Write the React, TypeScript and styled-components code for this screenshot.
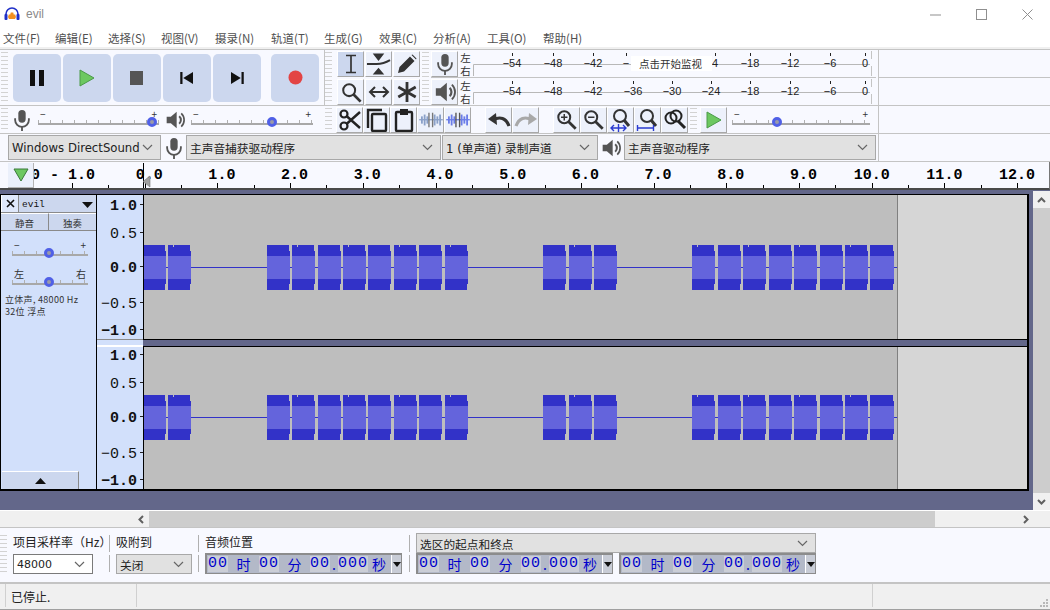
import styled, { createGlobalStyle } from "styled-components";

const Global = createGlobalStyle`
  html, body {
    margin: 0;
    width: 1050px;
    height: 610px;
    overflow: hidden;
    background: #fff;
    font-family: "Liberation Sans", "Noto Sans CJK SC", sans-serif;
  }
  * { box-sizing: border-box; }
`;

const CJK = `"Noto Sans CJK SC", "Liberation Sans", sans-serif`;
const MONO = `"Liberation Mono", monospace`;

const Window = styled.div`
  width: 1050px;
  height: 610px;
  display: flex;
  flex-direction: column;
`;

/* title + menu */
const TitleBar = styled.div`
  height: 28px;
  display: flex;
  align-items: center;
  padding-left: 4px;
  color: #8a8a8a;
  font-size: 12px;
  gap: 6px;
`;
const WinButtons = styled.div`
  margin-left: auto;
  display: flex;
  color: #8f8f8f;
`;
const WinButton = styled.div`
  width: 46px;
  height: 28px;
  display: flex;
  align-items: center;
  justify-content: center;
`;
const MenuBar = styled.div`
  height: 21px;
  display: flex;
  align-items: center;
  font-family: ${CJK};
  font-size: 11.5px;
  color: #505050;
  border-bottom: 2px solid #f0f0f0;
`;
const MenuItem = styled.span<{ $x: number }>`
  width: ${(p) => p.$x}px;
  padding-left: 3px;
  white-space: nowrap;
`;

/* dock */
const Dock = styled.div`
  height: 113px;
  display: flex;
  background: #f8f9ff;
  border-top: 1px solid #c4c4c4;
`;
const DockLeft = styled.div`
  width: 879px;
  flex: none;
  display: flex;
  flex-direction: column;
  border-right: 1px solid #c4c4c4;
`;
const DockRest = styled.div`
  flex: 1;
  display: flex;
  flex-direction: column;
`;
const DockLine = styled.div`
  height: 28px;
  border-bottom: 1px solid #c4c4c4;
`;
const TopRows = styled.div`
  height: 56px;
  flex: none;
  display: flex;
  border-bottom: 1px solid #c4c4c4;
`;
const Row = styled.div`
  height: 28px;
  flex: none;
  display: flex;
  align-items: center;
  border-bottom: 1px solid #c4c4c4;
`;
const Grip = styled.div<{ $w?: number; $mx?: number }>`
  flex: none;
  width: ${(p) => p.$w ?? 7}px;
  margin: 2px ${(p) => p.$mx ?? 0}px;
  align-self: stretch;
  background: repeating-linear-gradient(to bottom, #d2d2d2 0 1px, transparent 1px 4px);
`;
const Transport = styled.div`
  width: 325px;
  flex: none;
  display: flex;
  align-items: center;
  padding-left: 1px;
  border-right: 1px solid #c4c4c4;
`;
const BigButton = styled.div<{ $ml?: number }>`
  width: 48px;
  height: 48px;
  flex: none;
  margin-left: ${(p) => p.$ml ?? 2}px;
  border-radius: 5px;
  background: #ccd7ee;
  display: flex;
  align-items: center;
  justify-content: center;
`;
const ToolPanel = styled.div`
  display: flex;
  flex-direction: column;
  flex: none;
  width: 88px;
  padding-left: 5px;
`;
const ToolRow = styled.div`
  display: flex;
  height: 28px;
  flex: none;
  gap: 1px;
  align-items: center;
`;
const ToolButton = styled.div<{ $on?: boolean }>`
  width: 27px;
  height: 26px;
  flex: none;
  display: flex;
  align-items: center;
  justify-content: center;
  background: ${(p) => (p.$on ? "#ccd7ee" : "#edf1fb")};
  border-right: 1px solid #a8a8a8;
  border-bottom: 1px solid #a8a8a8;
  border-top: 1px solid #fff;
  border-left: 1px solid #fff;
  color: #333;
`;
const MeterStack = styled.div`
  width: 445px;
  flex: none;
  display: flex;
  flex-direction: column;
`;
const MeterRow = styled.div`
  height: 27px;
  flex: none;
  display: flex;
  align-items: center;
  &:first-child {
    height: 28px;
    border-bottom: 1px solid #c4c4c4;
  }
`;
const LeftRight = styled.div`
  width: 15px;
  flex: none;
  display: flex;
  flex-direction: column;
  align-items: center;
  font-family: ${CJK};
  font-size: 10.5px;
  line-height: 13px;
  color: #333;
`;
const Spacer = styled.div<{ $w: number }>`
  width: ${(p) => p.$w}px;
  flex: none;
`;
const IconCell = styled.div<{ $w?: number }>`
  width: ${(p) => p.$w ?? 26}px;
  flex: none;
  display: flex;
  align-items: center;
  justify-content: center;
  color: #555;
`;

/* slider */
const SliderBox = styled.div<{ $w: number }>`
  width: ${(p) => p.$w}px;
  flex: none;
  position: relative;
  height: 24px;
`;
const SliderEnds = styled.div`
  display: flex;
  justify-content: space-between;
  font-family: ${CJK};
  font-size: 10px;
  line-height: 10px;
  color: #333;
  height: 11px;
  padding: 1px 2px 0;
`;
const SliderTicks = styled.div`
  height: 3px;
  margin-top: 1px;
  background: repeating-linear-gradient(to right, #b0b0b0 0 1px, transparent 1px 12px);
`;
const SliderLine = styled.div`
  height: 2px;
  background: #a8a8a8;
`;
const Thumb = styled.div`
  position: absolute;
  top: 9px;
  width: 10px;
  height: 10px;
  border-radius: 50%;
  background: #9a9aa8;
  border: 3px solid #5060e6;
  margin-left: -5px;
`;

/* selects */
const Select = styled.div<{ $w: number; $h?: number; $white?: boolean }>`
  width: ${(p) => p.$w}px;
  height: ${(p) => p.$h ?? 25}px;
  flex: none;
  display: flex;
  align-items: center;
  justify-content: space-between;
  padding: 0 7px 0 3px;
  border: 1px solid ${(p) => (p.$white ? "#7a7a7a" : "#a8a8a8")};
  background: ${(p) => (p.$white ? "#fff" : "#e1e1e1")};
  font-family: "DejaVu Sans", ${CJK};
  font-size: ${(p) => (p.$white ? 11 : 11.7)}px;
  color: #222;
  white-space: nowrap;
`;

/* ruler */
const RulerBar = styled.div`
  height: 28px;
  flex: none;
  display: flex;
  align-items: flex-start;
  background: #f8f9ff;
  border-bottom: 2px solid #4a4a4a;
  border-right: 1px solid #777;
  padding-left: 8px;
`;
const PlayButton = styled.div`
  width: 26px;
  height: 25px;
  margin-top: 1px;
  flex: none;
  background: #ebf0fb;
  border-right: 1px solid #b4b4b4;
  border-bottom: 1px solid #b4b4b4;
  display: flex;
  align-items: center;
  justify-content: center;
`;

/* tracks */
const TrackArea = styled.div`
  height: 321px;
  flex: none;
  display: flex;
  background: #63678a;
  padding-top: 4px;
  border-bottom: 1px solid #fff;
`;
const TrackBox = styled.div`
  width: 1029px;
  height: 297px;
  flex: none;
  display: flex;
  border-style: solid;
  border-color: #000;
  border-width: 1px 2px 2px 1px;
`;
const TrackPanel = styled.div`
  width: 96px;
  flex: none;
  display: flex;
  flex-direction: column;
  background: #d2e0fb;
  border-right: 1px solid #000;
`;
const PanelTop = styled.div`
  display: flex;
  height: 18px;
  flex: none;
  border-bottom: 1px solid #8a8a8a;
`;
const CloseBox = styled.div`
  width: 18px;
  flex: none;
  display: flex;
  align-items: center;
  justify-content: center;
  background: #dfe8fb;
  border-right: 1px solid #8a8a8a;
  border-left: 1px solid #fff;
`;
const TrackName = styled.div`
  flex: 1;
  display: flex;
  align-items: center;
  justify-content: space-between;
  padding: 2px 3px 0;
  background: #ccd7ee;
  font-family: ${MONO};
  font-size: 9.5px;
  color: #111;
`;
const MuteRow = styled.div`
  display: flex;
  height: 18px;
  flex: none;
  border-bottom: 1px solid #8a8a8a;
`;
const MuteButton = styled.div`
  flex: 1;
  display: flex;
  align-items: center;
  justify-content: center;
  padding-top: 2px;
  background: #ccd7ee;
  border-right: 1px solid #8a8a8a;
  border-top: 1px solid #fff;
  font-family: ${CJK};
  font-size: 9.5px;
  color: #333;
  &:last-child { border-right: none; }
`;
const PanelSlider = styled.div`
  padding: 8px 0 0 11px;
  height: 29px;
  flex: none;
`;
const PanelInfo = styled.div`
  margin-top: 5px;
  padding-left: 4px;
  font-family: ${CJK};
  font-size: 9px;
  letter-spacing: 0.3px;
  line-height: 12px;
  color: #333;
  white-space: nowrap;
`;
const CollapseButton = styled.div`
  margin-top: auto;
  width: 77px;
  height: 18px;
  flex: none;
  margin-left: 1px;
  background: #ccd7ee;
  border-top: 1px solid #fff;
  border-right: 1px solid #8a8a8a;
  display: flex;
  align-items: center;
  justify-content: center;
`;
const Channels = styled.div`
  flex: 1;
  display: flex;
  flex-direction: column;
`;
const Channel = styled.div<{ $h: number }>`
  height: ${(p) => p.$h}px;
  flex: none;
  display: flex;
`;
const ScaleCol = styled.div`
  width: 47px;
  flex: none;
  background: #d2e0fb;
  border-right: 1px solid #000;
`;
const ClipArea = styled.div`
  width: 754px;
  flex: none;
  background: #bebebe;
  border-right: 1px solid #808080;
`;
const EmptyArea = styled.div`
  flex: 1;
  background: #d6d6d6;
`;
const ChannelGap = styled.div`
  height: 8px;
  flex: none;
  display: flex;
`;
const GapScale = styled.div`
  width: 46px;
  flex: none;
  background: #d2e0fb;
  border-top: 1px solid #8a8a8a;
  border-bottom: 2px solid #fff;
`;
const GapBar = styled.div`
  flex: 1;
  background: #63678a;
  border-top: 1px solid #000;
  border-bottom: 1px solid #000;
`;
const VScroll = styled.div`
  width: 17px;
  margin-left: 4px;
  margin-top: -3px;
  flex: none;
  background: #f0f0f0;
  display: flex;
  flex-direction: column;
  align-items: center;
  height: 319px;
`;
const ScrollArrow = styled.div<{ $w?: number; $h?: number }>`
  width: ${(p) => p.$w ?? 17}px;
  height: ${(p) => p.$h ?? 17}px;
  flex: none;
  display: flex;
  align-items: center;
  justify-content: center;
  color: #606060;
`;
const VThumb = styled.div`
  flex: 1;
  width: 100%;
  background: #cdcdcd;
`;
const HScroll = styled.div`
  height: 16px;
  flex: none;
  display: flex;
  background: #f0f0f0;
  padding-left: 132px;
`;
const HThumb = styled.div`
  width: 786px;
  flex: none;
  background: #cdcdcd;
`;
const HFill = styled.div`
  flex: 1;
  display: flex;
  justify-content: flex-end;
  padding-right: 16px;
`;

/* selection bar */
const SelectionBar = styled.div`
  height: 57px;
  flex: none;
  display: flex;
  background: #f8f9ff;
  border-top: 1px solid #c4c4c4;
  border-bottom: 2px solid #c4c4c4;
  padding: 5px 0 8px 0;
`;
const Field = styled.div<{ $w: number }>`
  width: ${(p) => p.$w}px;
  flex: none;
  display: flex;
  flex-direction: column;
  justify-content: space-between;
  font-family: ${CJK};
  font-size: 12px;
  color: #222;
`;
const FieldLabel = styled.div`
  height: 18px;
  line-height: 18px;
  white-space: nowrap;
`;
const FieldSep = styled.div`
  width: 7px;
  flex: none;
  display: flex;
  flex-direction: column;
  justify-content: space-between;
  align-items: flex-start;
  padding: 2px 0;
  &::before, &::after {
    content: "";
    width: 1px;
    height: 17px;
    background: #b0b0b0;
  }
`;
const TimeBox = styled.div`
  width: 197px;
  height: 21px;
  flex: none;
  display: flex;
  align-items: center;
  background: #b3b9c8;
  border: 1px solid #8c8c8c;
  border-width: 2px 1px 1px 2px;
  padding-left: 1px;
  font-family: ${MONO};
  font-size: 15px;
  color: #0000cc;
`;
const Digits = styled.span<{ $w: number }>`
  width: ${(p) => p.$w}px;
  flex: none;
  height: 16px;
  line-height: 16px;
  background: #cbced6;
  text-align: center;
  letter-spacing: 1px;
`;
const Unit = styled.span<{ $w: number }>`
  width: ${(p) => p.$w}px;
  flex: none;
  text-align: center;
  font-family: ${CJK};
  font-size: 14px;
  line-height: 16px;
`;
const TimeDrop = styled.div`
  margin-left: auto;
  width: 10px;
  align-self: stretch;
  background: #c8ccd6;
  border-left: 1px solid #fff;
  display: flex;
  align-items: center;
  justify-content: center;
`;
const TimePair = styled.div`
  display: flex;
  gap: 6px;
`;

/* status */
const StatusBar = styled.div`
  flex: 1;
  display: flex;
  background: #f0f0f0;
  border-bottom: 1px solid #a0a0a0;
  font-family: ${CJK};
  font-size: 12px;
  color: #222;
  position: relative;
`;
const StatusCell = styled.div<{ $w?: number }>`
  width: ${(p) => (p.$w ? `${p.$w}px` : "auto")};
  flex: ${(p) => (p.$w ? "none" : 1)};
  padding: 4px 0 0 5px;
  margin-bottom: 2px;
  border-left: 1px solid #d0d0d0;
  &:first-child { margin-left: 5px; }
`;
const ResizeGrip = styled.svg`
  position: absolute;
  right: 1px;
  bottom: 1px;
`;

/* icons */
const Ic = ({ s = 20, children, c = "currentColor" }: { s?: number; children: React.ReactNode; c?: string }) => (
  <svg width={s} height={s} viewBox="0 0 24 24" fill={c} stroke="none">{children}</svg>
);

const MicIcon = ({ s = 22 }: { s?: number }) => (
  <Ic s={s} c="#555">
    <rect x="8" y="1" width="8" height="14" rx="4" />
    <path d="M4.5 10v2a7.5 7.5 0 0 0 15 0v-2" fill="none" stroke="#555" strokeWidth="2" />
    <rect x="11" y="19" width="2" height="5" />
  </Ic>
);
const SpeakerIcon = ({ s = 22 }: { s?: number }) => (
  <Ic s={s} c="#555">
    <path d="M2 8h5l7-6v20l-7-6H2z" />
    <path d="M17 7.5a6 6 0 0 1 0 9" fill="none" stroke="#555" strokeWidth="2.4" />
    <path d="M19.5 4a11 11 0 0 1 0 16" fill="none" stroke="#555" strokeWidth="2" />
  </Ic>
);
const Chevron = ({ c = "#666" }: { c?: string }) => (
  <svg width="11" height="7" viewBox="0 0 11 7"><path d="M1 1l4.5 4.5L10 1" fill="none" stroke={c} strokeWidth="1.2" /></svg>
);
const Glass = ({ x = 9.5, y = 9.5, r = 6.5 }: { x?: number; y?: number; r?: number }) => (
  <>
    <circle cx={x} cy={y} r={r} fill="none" stroke="#333" strokeWidth="2.2" />
    <path d={`M${x + r * 0.7} ${y + r * 0.7}L${x + r + 6} ${y + r + 6}`} stroke="#333" strokeWidth="3" />
  </>
);
const Bars = ({ c, inner }: { c: string; inner: string }) => (
  <svg width="24" height="20" viewBox="0 0 26 22">
    {[2, 5, 8, 16, 19, 22].map((x, i) => (
      <rect key={x} x={x} y={i % 2 ? 5 : 7} width="2" height={i % 2 ? 12 : 8} fill={c} />
    ))}
    <rect x="0" y="10" width="26" height="1.4" fill={c} />
    <rect x="10" y="3" width="1.5" height="16" fill={inner} />
    <rect x="14" y="3" width="1.5" height="16" fill={inner} />
  </svg>
);

const menus: [string, number][] = [
  ["文件(F)", 52], ["编辑(E)", 53], ["选择(S)", 53], ["视图(V)", 54], ["摄录(N)", 56], ["轨道(T)", 53],
  ["生成(G)", 55], ["效果(C)", 54], ["分析(A)", 54], ["工具(O)", 56], ["帮助(H)", 60],
];

const meterMarks: [string, number][] = [
  ["−54", 512], ["−48", 553], ["−42", 593], ["−36", 633], ["−30", 672], ["−24", 711],
  ["−18", 750], ["−12", 790], ["−6", 830], ["0", 865],
];
// the monitor hint covers most of -36 to -24, only these bits stay visible
const hintMarks: [string, number][] = [
  ["−54", 512], ["−48", 553], ["−42", 593], ["−", 626], ["4", 715],
  ["−18", 750], ["−12", 790], ["−6", 830], ["0", 865],
];

const MeterLabel = styled.text`
  font-family: "Liberation Sans", sans-serif;
  font-size: 11px;
  fill: #222;
  text-anchor: middle;
`;

const Meter = ({ hint }: { hint?: boolean }) => (
  <svg width="403" height="27" viewBox="473 0 403 27">
    <path d="M473.5 26V14.5H870" fill="none" stroke="#b8b8b8" />
    <path d="M871.5 1v8M871.5 16v10" stroke="#c4c4c4" />
    {(hint ? hintMarks : meterMarks).map(([t, x]) => (
      <g key={t}>
        <rect x={x} y="3" width="1" height="3" fill="#222" />
        <MeterLabel x={x} y="17">{t}</MeterLabel>
      </g>
    ))}
    {hint && (
      <>
        <rect x="631" y="6" width="81" height="15" fill="#fff" />
        <text x="639" y="18" fontFamily="Noto Sans CJK SC" fontSize="10.5" fill="#333">点击开始监视</text>
      </>
    )}
  </svg>
);

const Slider = ({ w, at, ends = ["−", "+"] }: { w: number; at: number; ends?: string[] }) => (
  <SliderBox $w={w}>
    <SliderEnds><span>{ends[0]}</span><span>{ends[1]}</span></SliderEnds>
    <SliderTicks />
    <SliderLine />
    <Thumb style={{ left: at }} />
  </SliderBox>
);

const secX = (s: number) => 144.7 + 72.7 * s;

const Ruler = () => {
  const secs = Array.from({ length: 13 }, (_, i) => i);
  return (
    <svg width="1007" height="26" viewBox="34 0 1007 26" style={{ flex: "none" }}>
      <text x="31" y="17" fontFamily="Liberation Mono" fontWeight="700" fontSize="15" fill="#000">0</text>
      <text x="50" y="17" fontFamily="Liberation Mono" fontWeight="700" fontSize="15" fill="#000">- 1.0</text>
      {secs.map((s) => (
        <g key={s}>
          <text x={secX(s) + 18} y="17" textAnchor="end" fontFamily="Liberation Mono" fontWeight="700" fontSize="15" fill="#000">{s}.0</text>
          <rect x={Math.round(secX(s))} y="21" width="1" height="5" fill="#000" />
          <rect x={Math.round(secX(s) + 36.3)} y="23" width="1" height="3" fill="#000" />
        </g>
      ))}
      <rect x={Math.round(secX(-1))} y="21" width="1" height="5" fill="#000" />
      <rect x={Math.round(secX(-0.5))} y="23" width="1" height="3" fill="#000" />
      <rect x="143" y="1" width="1" height="25" fill="#000" />
      <path d="M150 14v11l-7-5.500z" fill="#a0a0a0" stroke="#777" strokeWidth="0.6" />
    </svg>
  );
};

const scaleMarks: [string, number, boolean][] = [
  ["1.0", 0, true], ["0.5", 28, false], ["0.0", 62, true], ["−0.5", 98, false], ["−1.0", 125, true],
];

const Scale = ({ top, h }: { top: number; h: number }) => (
  <svg width="46" height={h} viewBox={`0 0 46 ${h}`} style={{ display: "block" }}>
    {scaleMarks.map(([t, y, strong]) => (
      <g key={t}>
        <text
          x="40"
          y={top + y}
          textAnchor="end"
          fontFamily="Liberation Mono"
          fontWeight={strong ? 700 : 400}
          fontSize="15"
          fill="#111"
        >{t}</text>
        <rect x="43" y={top + y - 6} width="3" height="1" fill="#222" />
      </g>
    ))}
  </svg>
);

const blocks: [number, number][] = [
  [144, 165], [168, 190], [267, 289], [292, 314], [318, 340], [343, 365], [368, 390], [394, 416], [419, 441], [445, 467],
  [543, 565], [569, 591], [594, 616], [692, 714], [718, 740], [743, 765], [769, 791], [794, 816], [820, 842], [845, 867], [870, 893],
];

const Wave = ({ mid, h }: { mid: number; h: number }) => (
  <svg width="753" height={h} viewBox={`144 0 753 ${h}`} style={{ display: "block" }}>
    <rect x="144" y={mid} width="753" height="1" fill="#3232c8" />
    {blocks.map(([a, b], i) => (
      <g key={a}>
        <rect x={a} y={mid - 22} width={b - a} height="45" fill="#3232c8" />
        <rect x={b} y={mid - 16} width="1" height="33" fill="#3232c8" />
        <rect x={a} y={mid - 11} width={b - a + 1} height="23" fill="#6464dc" />
        {i % 2 === 1 && <rect x={a + 5} y={mid - 22} width="1" height="2" fill="#bebebe" />}
      </g>
    ))}
  </svg>
);

const Digit = ({ v, w }: { v: string; w: number }) => <Digits $w={w}>{v}</Digits>;

const DownTri = () => (
  <svg width="8" height="5" viewBox="0 0 8 5"><path d="M0 0h8L4 5z" fill="#111" /></svg>
);

const Time = () => (
  <TimeBox>
    <Digit v="00" w={20} /><Unit $w={31}>时</Unit>
    <Digit v="00" w={20} /><Unit $w={31}>分</Unit>
    <Digit v="00" w={20} /><Unit $w={8}>.</Unit>
    <Digit v="000" w={30} /><Unit $w={22}>秒</Unit>
    <TimeDrop><DownTri /></TimeDrop>
  </TimeBox>
);

export default function App() {
  return (
    <Window>
      <Global />
      <TitleBar>
        <svg width="16" height="16" viewBox="0 0 16 16">
          <path d="M2 10V8a6 6 0 0 1 12 0v2" fill="none" stroke="#2030c8" strokeWidth="1.6" />
          <rect x="0.500" y="8" width="3" height="6" rx="1" fill="#2030c8" />
          <rect x="12.500" y="8" width="3" height="6" rx="1" fill="#2030c8" />
          <path d="M4 11l1-3 1 1 1-3 1 1 1-1 1 3 1-1 1 3-1 2H5z" fill="#f29020" />
        </svg>
        <span>evil</span>
        <WinButtons>
          <WinButton>
            <svg width="11" height="11" viewBox="0 0 11 11"><path d="M0 6h11" stroke="currentColor" /></svg>
          </WinButton>
          <WinButton>
            <svg width="11" height="11" viewBox="0 0 11 11"><rect x="0.500" y="0.500" width="10" height="10" fill="none" stroke="currentColor" /></svg>
          </WinButton>
          <WinButton>
            <svg width="11" height="11" viewBox="0 0 11 11"><path d="M0.500 0.500l10 10M10.500 0.500l-10 10" stroke="currentColor" /></svg>
          </WinButton>
        </WinButtons>
      </TitleBar>
      <MenuBar>
        {menus.map(([t, w]) => <MenuItem key={t} $x={w}>{t}</MenuItem>)}
      </MenuBar>

      <Dock>
        <DockLeft>
          <TopRows>
            <Transport>
              <Grip />
              <Spacer $w={3} />
              <BigButton>
                <Ic s={24} c="#111"><rect x="5" y="4" width="5" height="16" /><rect x="14" y="4" width="5" height="16" /></Ic>
              </BigButton>
              <BigButton>
                <svg width="18" height="20" viewBox="0 0 18 20"><path d="M2 2l14 8-14 8z" fill="#6cc860" stroke="#4a9a48" /></svg>
              </BigButton>
              <BigButton>
                <Ic s={24} c="#555"><rect x="5" y="5" width="13" height="14" /></Ic>
              </BigButton>
              <BigButton>
                <Ic s={18} c="#111"><rect x="3" y="4" width="3" height="16" /><path d="M20 4v16L7 12z" /></Ic>
              </BigButton>
              <BigButton>
                <Ic s={18} c="#111"><path d="M4 4v16l13-8z" /><rect x="18" y="4" width="3" height="16" /></Ic>
              </BigButton>
              <BigButton $ml={10}>
                <svg width="15" height="15" viewBox="0 0 15 15"><circle cx="7.500" cy="7.500" r="7" fill="#e34444" /></svg>
              </BigButton>
            </Transport>
            <Grip />
            <ToolPanel>
              <ToolRow>
                <ToolButton $on>
                  <svg width="14" height="20" viewBox="0 0 14 20"><path d="M2 1.500h10M2 18.500h10M7 1.500v17" stroke="#333" strokeWidth="1.700" fill="none" /></svg>
                </ToolButton>
                <ToolButton>
                  <svg width="26" height="22" viewBox="0 0 26 22">
                    <path d="M7 0h12l-6 8zM7 22h12l-6-7z" fill="#333" />
                    <path d="M1 11h10c5 0 9-1 14-4" fill="none" stroke="#333" strokeWidth="2" />
                  </svg>
                </ToolButton>
                <ToolButton>
                  <svg width="20" height="20" viewBox="0 0 20 20"><path d="M1 19l1.500-6L13 2.500l4.500 4.500L7 17.500zM14.500 1l1-.5 4 4-.5 1z" fill="#333" /></svg>
                </ToolButton>
              </ToolRow>
              <ToolRow>
                <ToolButton><Ic s={22}><Glass x={10} y={10} r={6.5} /></Ic></ToolButton>
                <ToolButton>
                  <svg width="22" height="14" viewBox="0 0 22 14"><path d="M2 7h18M7 2L2 7l5 5M15 2l5 5-5 5" stroke="#333" strokeWidth="2" fill="none" /></svg>
                </ToolButton>
                <ToolButton>
                  <svg width="22" height="22" viewBox="0 0 22 22"><path d="M11 1v20M2.300 6l17.400 10M2.300 16L19.700 6" stroke="#333" strokeWidth="2.800" /></svg>
                </ToolButton>
              </ToolRow>
            </ToolPanel>
            <Grip $w={7} $mx={2} />
            <MeterStack>
              <MeterRow>
                <ToolButton><MicIcon /></ToolButton>
                <LeftRight><span>左</span><span>右</span></LeftRight>
                <Meter hint />
              </MeterRow>
              <MeterRow>
                <ToolButton><SpeakerIcon /></ToolButton>
                <LeftRight><span>左</span><span>右</span></LeftRight>
                <Meter />
              </MeterRow>
            </MeterStack>
          </TopRows>

          <Row>
            <Grip $mx={1} />
            <IconCell $w={26}><MicIcon /></IconCell>
            <Spacer $w={3} />
            <Slider w={121} at={114} />
            <IconCell $w={32}><SpeakerIcon s={20} /></IconCell>
            <Slider w={122} at={81} />
            <Spacer $w={12} />
            <Grip />
            <Spacer $w={4} />
            <ToolButton>
              <svg width="24" height="24" viewBox="0 0 24 24"><circle cx="6" cy="6" r="3.500" fill="none" stroke="#222" strokeWidth="2.200" /><circle cx="6" cy="18" r="3.500" fill="none" stroke="#222" strokeWidth="2.200" /><path d="M8.500 8L22 20M8.500 16L22 4" stroke="#222" strokeWidth="2.400" /></svg>
            </ToolButton>
            <ToolButton>
              <svg width="22" height="24" viewBox="0 0 22 24"><path d="M2 20V2h14" fill="none" stroke="#222" strokeWidth="2.400" /><rect x="6" y="6" width="14" height="17" rx="1" fill="none" stroke="#222" strokeWidth="2.400" /></svg>
            </ToolButton>
            <ToolButton>
              <svg width="20" height="24" viewBox="0 0 20 24"><rect x="2" y="4" width="16" height="19" rx="1" fill="none" stroke="#222" strokeWidth="2.400" /><rect x="6" y="1" width="8" height="6" fill="#222" /></svg>
            </ToolButton>
            <ToolButton><Bars c="#8aa0c8" inner="#777" /></ToolButton>
            <ToolButton><Bars c="#6a7ce8" inner="#555" /></ToolButton>
            <Spacer $w={14} />
            <ToolButton>
              <svg width="24" height="16" viewBox="0 0 24 16"><path d="M6 8c7-4 13-2 16 6" fill="none" stroke="#333" strokeWidth="3.200" /><path d="M1 7l8-6 1 12z" fill="#333" /></svg>
            </ToolButton>
            <ToolButton>
              <svg width="24" height="16" viewBox="0 0 24 16"><path d="M18 8c-7-4-13-2-16 6" fill="none" stroke="#a8a8a8" strokeWidth="3.200" /><path d="M23 7l-8-6-1 12z" fill="#a8a8a8" /></svg>
            </ToolButton>
            <Spacer $w={14} />
            <ToolButton>
              <Ic s={22}><Glass x={9} y={9} /><path d="M5.500 9h7M9 5.500v7" stroke="#333" strokeWidth="1.600" /></Ic>
            </ToolButton>
            <ToolButton>
              <Ic s={22}><Glass x={9} y={9} /><path d="M5.500 9h7" stroke="#333" strokeWidth="1.600" /></Ic>
            </ToolButton>
            <ToolButton>
              <svg width="24" height="24" viewBox="0 0 24 24">
                <circle cx="11" cy="8" r="6" fill="none" stroke="#333" strokeWidth="2" /><path d="M15 12l5 6" stroke="#333" strokeWidth="3" />
                <path d="M2 20h15M5 17l-3 3 3 3M14 17l3 3-3 3M9.500 16v8" stroke="#2a3ad0" strokeWidth="1.400" fill="none" />
              </svg>
            </ToolButton>
            <ToolButton>
              <svg width="24" height="24" viewBox="0 0 24 24">
                <circle cx="11" cy="8" r="6" fill="none" stroke="#333" strokeWidth="2" /><path d="M15 12l5 6" stroke="#333" strokeWidth="3" />
                <path d="M2 20h15M1.500 17v6M17.500 17v6" stroke="#2a3ad0" strokeWidth="1.400" fill="none" />
              </svg>
            </ToolButton>
            <ToolButton>
              <svg width="24" height="24" viewBox="0 0 24 24">
                <circle cx="8" cy="10" r="5.500" fill="none" stroke="#222" strokeWidth="2" /><circle cx="13" cy="8" r="5.500" fill="none" stroke="#222" strokeWidth="2" /><path d="M15 13l7 7" stroke="#222" strokeWidth="3" />
              </svg>
            </ToolButton>
            <Spacer $w={2} />
            <Grip />
            <Spacer $w={3} />
            <ToolButton>
              <svg width="18" height="20" viewBox="0 0 18 20"><path d="M2 2l14 8-14 8z" fill="#6cc860" stroke="#4a9a48" /></svg>
            </ToolButton>
            <Spacer $w={5} />
            <Slider w={138} at={45} />
          </Row>

          <Row>
            <Spacer $w={8} />
            <Select $w={153}>Windows DirectSound<Chevron /></Select>
            <IconCell $w={25}><MicIcon /></IconCell>
            <Select $w={255}>主声音捕获驱动程序<Chevron /></Select>
            <Spacer $w={1} />
            <Select $w={156}>1 (单声道) 录制声道<Chevron /></Select>
            <IconCell $w={26}><SpeakerIcon s={20} /></IconCell>
            <Select $w={252}>主声音驱动程序<Chevron /></Select>
          </Row>
        </DockLeft>
        <DockRest>
          <DockLine />
          <DockLine />
          <DockLine />
          <DockLine />
        </DockRest>
      </Dock>

      <RulerBar>
        <PlayButton>
          <svg width="16" height="14" viewBox="0 0 16 14"><path d="M1 1h14L8 13z" fill="#6cc860" stroke="#3a7a3a" /></svg>
        </PlayButton>
        <Ruler />
      </RulerBar>

      <TrackArea>
        <TrackBox>
          <TrackPanel>
            <PanelTop>
              <CloseBox>
                <svg width="9" height="9" viewBox="0 0 9 9"><path d="M1 1l7 7M8 1L1 8" stroke="#111" strokeWidth="1.600" /></svg>
              </CloseBox>
              <TrackName>
                <span>evil</span>
                <svg width="11" height="6" viewBox="0 0 11 6"><path d="M0 0h11L5.500 6z" fill="#111" /></svg>
              </TrackName>
            </PanelTop>
            <MuteRow>
              <MuteButton>静音</MuteButton>
              <MuteButton>独奏</MuteButton>
            </MuteRow>
            <PanelSlider><Slider w={76} at={37} /></PanelSlider>
            <PanelSlider><Slider w={76} at={37} ends={["左", "右"]} /></PanelSlider>
            <PanelInfo>
              <div>立体声, 48000 Hz</div>
              <div>32位 浮点</div>
            </PanelInfo>
            <CollapseButton>
              <svg width="11" height="6" viewBox="0 0 11 6"><path d="M0 6h11L5.500 0z" fill="#111" /></svg>
            </CollapseButton>
          </TrackPanel>
          <Channels>
            <Channel $h={144}>
              <ScaleCol><Scale top={15} h={144} /></ScaleCol>
              <ClipArea><Wave mid={72} h={142} /></ClipArea>
              <EmptyArea />
            </Channel>
            <ChannelGap>
              <GapScale />
              <GapBar />
            </ChannelGap>
            <Channel $h={142}>
              <ScaleCol><Scale top={13} h={142} /></ScaleCol>
              <ClipArea><Wave mid={70} h={142} /></ClipArea>
              <EmptyArea />
            </Channel>
          </Channels>
        </TrackBox>
        <VScroll>
          <ScrollArrow>
            <svg width="9" height="6" viewBox="0 0 9 6"><path d="M1 5l3.500-3.500L8 5" fill="none" stroke="currentColor" strokeWidth="2" /></svg>
          </ScrollArrow>
          <VThumb />
          <ScrollArrow>
            <svg width="9" height="6" viewBox="0 0 9 6"><path d="M1 1l3.500 3.500L8 1" fill="none" stroke="currentColor" strokeWidth="2" /></svg>
          </ScrollArrow>
        </VScroll>
      </TrackArea>

      <HScroll>
        <ScrollArrow $w={17} $h={16}>
          <svg width="6" height="9" viewBox="0 0 6 9"><path d="M5 1L1.500 4.500 5 8" fill="none" stroke="currentColor" strokeWidth="2" /></svg>
        </ScrollArrow>
        <HThumb />
        <HFill>
          <ScrollArrow $w={17} $h={16}>
            <svg width="6" height="9" viewBox="0 0 6 9"><path d="M1 1l3.500 3.500L1 8" fill="none" stroke="currentColor" strokeWidth="2" /></svg>
          </ScrollArrow>
        </HFill>
      </HScroll>

      <SelectionBar>
        <Grip $w={7} $mx={0} />
        <Spacer $w={6} />
        <Field $w={96}>
          <FieldLabel>项目采样率（Hz）</FieldLabel>
          <Select $w={80} $h={20} $white>48000<Chevron /></Select>
        </Field>
        <FieldSep />
        <Field $w={82}>
          <FieldLabel>吸附到</FieldLabel>
          <Select $w={76} $h={20}>关闭<Chevron /></Select>
        </Field>
        <FieldSep />
        <Field $w={204}>
          <FieldLabel>音频位置</FieldLabel>
          <Time />
        </Field>
        <FieldSep />
        <Field $w={400}>
          <Select $w={400} $h={20}>选区的起点和终点<Chevron /></Select>
          <TimePair><Time /><Time /></TimePair>
        </Field>
      </SelectionBar>

      <StatusBar>
        <StatusCell $w={131}>已停止.</StatusCell>
        <StatusCell $w={736} />
        <StatusCell />
        <ResizeGrip width="12" height="12" viewBox="0 0 12 12">
          <path d="M9 3h2v2H9zM6 6h2v2H6zM9 6h2v2H9zM3 9h2v2H3zM6 9h2v2H6zM9 9h2v2H9z" fill="#b8b8b8" />
        </ResizeGrip>
      </StatusBar>
    </Window>
  );
}
